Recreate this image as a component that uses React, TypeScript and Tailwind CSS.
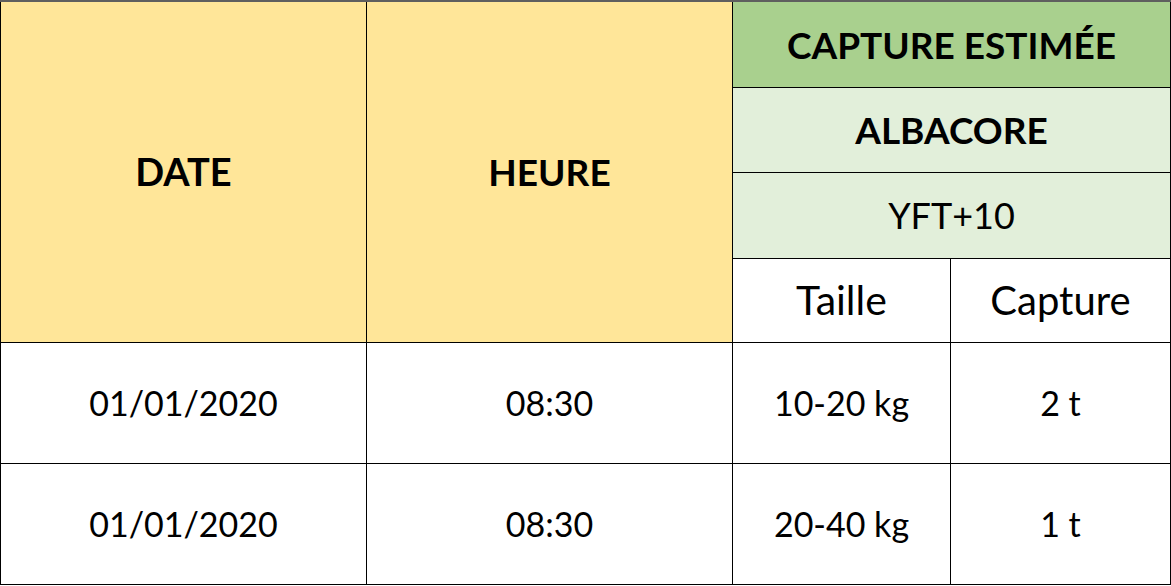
const rows = [
  { date: "01/01/2020", heure: "08:30", taille: "10-20 kg", capture: "2 t" },
  { date: "01/01/2020", heure: "08:30", taille: "20-40 kg", capture: "1 t" },
];

export default function App() {
  return (
    <div className="h-[586px] w-[1171px] bg-white font-['Lato','Open_Sans',sans-serif] text-black">
      <table className="w-[1170px] table-fixed border-collapse border-t-2 border-t-[#5f5f5f] text-center text-[34px]">
        <colgroup>
          <col className="w-[366px]" />
          <col className="w-[366px]" />
          <col className="w-[218px]" />
          <col className="w-[220px]" />
        </colgroup>
        <tbody>
          <tr className="h-[86px]">
            <td rowSpan={4} className="border border-black bg-[#ffe699] text-[38px] font-bold">DATE</td>
            <td rowSpan={4} className="border border-black bg-[#ffe699] text-[37px] font-bold">HEURE</td>
            <td colSpan={2} className="border border-black bg-[#a9d08e] text-[37px] font-bold">CAPTURE ESTIMÉE</td>
          </tr>
          <tr className="h-[85px]">
            <td colSpan={2} className="border border-black bg-[#e2efda] text-[37px] font-bold">ALBACORE</td>
          </tr>
          <tr className="h-[86px]">
            <td colSpan={2} className="border border-black bg-[#e2efda] text-[36px]">YFT+10</td>
          </tr>
          <tr className="h-[84px]">
            <td className="border border-black text-[41px]">Taille</td>
            <td className="border border-black text-[40px]">Capture</td>
          </tr>
          {rows.map((row, i) => (
            <tr key={i} className="h-[121px]">
              <td className="border border-black">{row.date}</td>
              <td className="border border-black">{row.heure}</td>
              <td className="border border-black">{row.taille}</td>
              <td className="border border-black">{row.capture}</td>
            </tr>
          ))}
        </tbody>
      </table>
    </div>
  );
}
